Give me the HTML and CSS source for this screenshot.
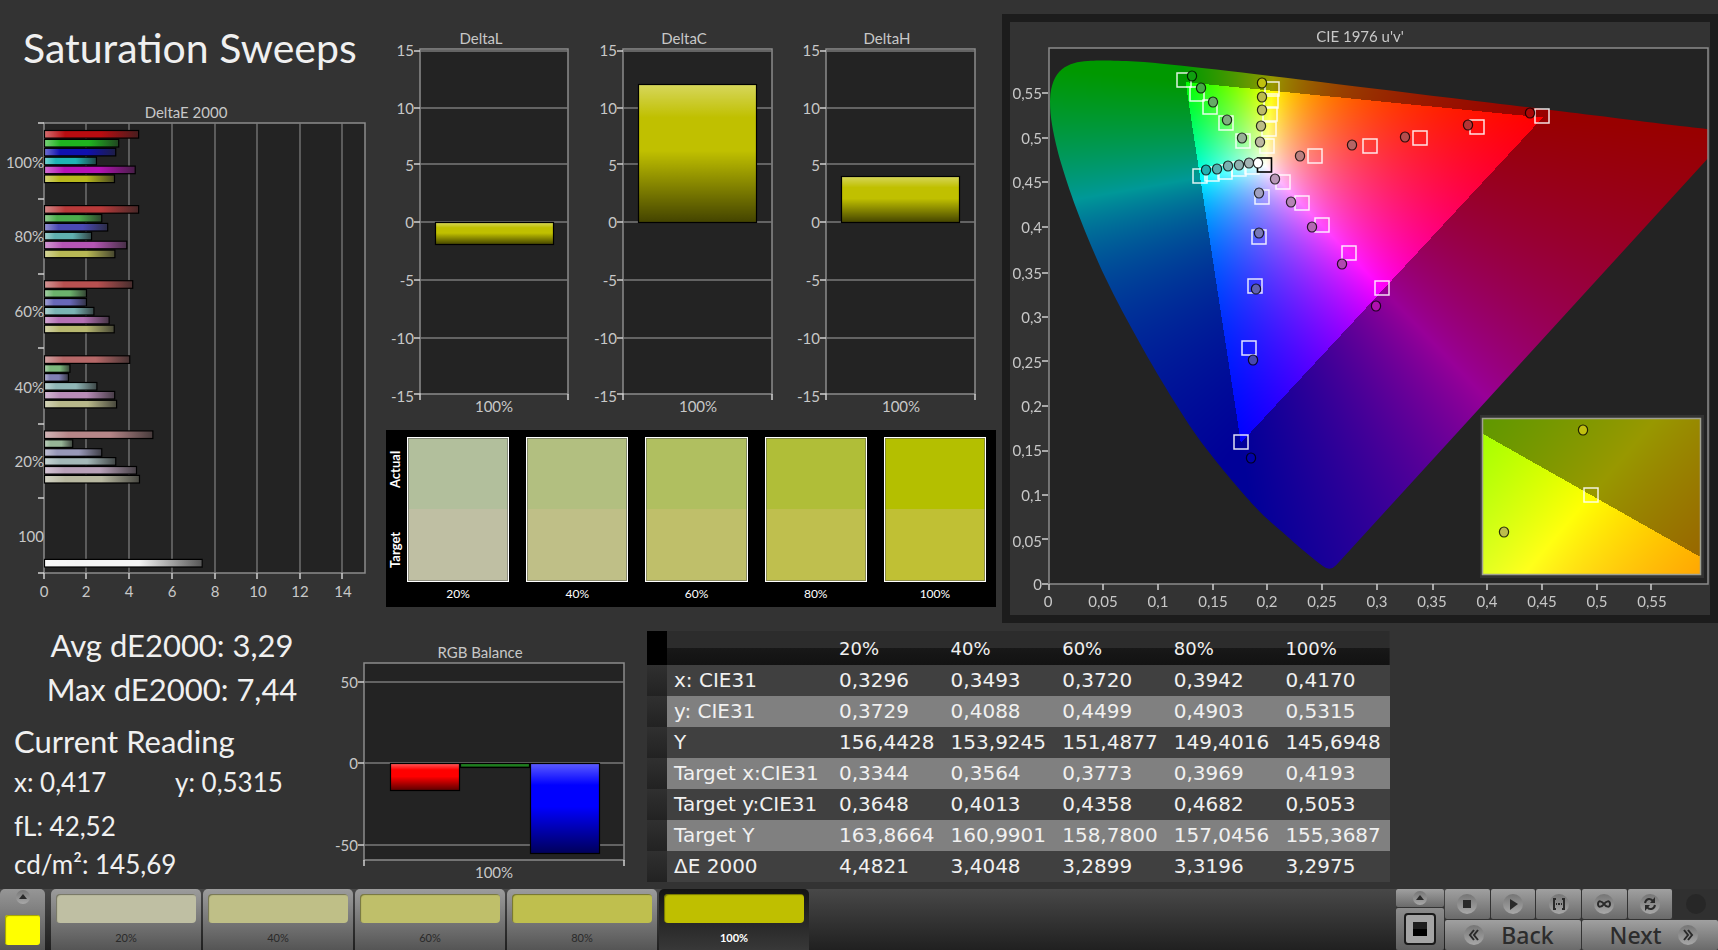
FILE: index.html
```
<!DOCTYPE html>
<html lang="en">
<head>
<meta charset="utf-8">
<title>Saturation Sweeps</title>
<link rel="stylesheet" href="styles.css">
</head>
<body>
<svg class="defs" width="0" height="0" aria-hidden="true">
  <defs>
    <linearGradient id="gloss-x" x1="0" x2="1" y1="0" y2="0">
      <stop offset="0" stop-color="#fff" stop-opacity=".4"/>
      <stop offset=".22" stop-color="#fff" stop-opacity="0"/>
      <stop offset=".6" stop-color="#222" stop-opacity="0"/>
      <stop offset="1" stop-color="#222" stop-opacity=".75"/>
    </linearGradient>
    <linearGradient id="gloss-y" x1="0" x2="0" y1="0" y2="1">
      <stop offset="0" stop-color="#fff" stop-opacity=".36"/>
      <stop offset=".24" stop-color="#fff" stop-opacity="0"/>
      <stop offset=".48" stop-color="#000" stop-opacity="0"/>
      <stop offset="1" stop-color="#000" stop-opacity=".65"/>
    </linearGradient>
  </defs>
</svg>

<main class="workspace">
  <div class="row-top">
    <section class="sweep">
      <h1 class="title">Saturation Sweeps</h1>
      <svg class="chart" viewBox="0 100 386 510" role="img" aria-label="DeltaE 2000 chart">
        <rect class="plot" x="44" y="123" width="321" height="450"/>
        <path class="grid" d="M86 123V573M129 123V573M172 123V573M215 123V573M257 123V573M300 123V573M342 123V573"/>
        <path class="tick" d="M38 123H44M38 199H44M38 274H44M38 348H44M38 424H44M38 498H44M38 573H44M44 573V579M86 573V579M129 573V579M172 573V579M215 573V579M257 573V579M300 573V579M342 573V579"/>
        <g id="delta-e-bars"></g>
        <g class="mid">
          <text x="186" y="118">DeltaE 2000</text>
          <text x="44" y="597">0</text><text x="86" y="597">2</text><text x="129" y="597">4</text><text x="172" y="597">6</text>
          <text x="215" y="597">8</text><text x="258" y="597">10</text><text x="300" y="597">12</text><text x="343" y="597">14</text>
        </g>
        <g class="end">
          <text x="44" y="168">100%</text><text x="44" y="242">80%</text><text x="44" y="317">60%</text>
          <text x="44" y="393">40%</text><text x="44" y="467">20%</text><text x="44" y="542">100</text>
        </g>
      </svg>
    </section>

    <section class="deltas">
      <svg class="chart" viewBox="386 0 616 420" role="img" aria-label="DeltaL, DeltaC and DeltaH charts">
        <g>
          <rect class="plot" x="420" y="49" width="148" height="345"/>
          <path class="grid" d="M420 51H568M420 108H568M420 164H568M420 222H568M420 280H568M420 338H568"/>
          <path class="tick" d="M414 51H420M414 108H420M414 164H420M414 222H420M414 280H420M414 338H420M414 394H420V400M568 394V400"/>
        </g>
        <g>
          <rect class="plot" x="623" y="49" width="149" height="345"/>
          <path class="grid" d="M623 51H772M623 108H772M623 164H772M623 222H772M623 280H772M623 338H772"/>
          <path class="tick" d="M617 51H623M617 108H623M617 164H623M617 222H623M617 280H623M617 338H623M617 394H623V400M772 394V400"/>
        </g>
        <g>
          <rect class="plot" x="826" y="49" width="149" height="345"/>
          <path class="grid" d="M826 51H975M826 108H975M826 164H975M826 222H975M826 280H975M826 338H975"/>
          <path class="tick" d="M820 51H826M820 108H826M820 164H826M820 222H826M820 280H826M820 338H826M820 394H826V400M975 394V400"/>
        </g>
        <g id="delta-bars"></g>
        <g class="mid">
          <text x="481" y="44">DeltaL</text><text x="684" y="44">DeltaC</text><text x="887" y="44">DeltaH</text>
          <text x="494" y="412">100%</text><text x="698" y="412">100%</text><text x="901" y="412">100%</text>
        </g>
        <g class="end">
          <text x="414" y="56">15</text><text x="414" y="114">10</text><text x="414" y="171">5</text><text x="414" y="228">0</text><text x="414" y="286">-5</text><text x="414" y="344">-10</text><text x="414" y="402">-15</text>
          <text x="617" y="56">15</text><text x="617" y="114">10</text><text x="617" y="171">5</text><text x="617" y="228">0</text><text x="617" y="286">-5</text><text x="617" y="344">-10</text><text x="617" y="402">-15</text>
          <text x="820" y="56">15</text><text x="820" y="114">10</text><text x="820" y="171">5</text><text x="820" y="228">0</text><text x="820" y="286">-5</text><text x="820" y="344">-10</text><text x="820" y="402">-15</text>
        </g>
      </svg>
      <div class="compare">
        <div class="compare-sides"><span>Actual</span><span>Target</span></div>
        <div class="pair"><div class="pair-box pair-20"></div><span>20%</span></div>
        <div class="pair"><div class="pair-box pair-40"></div><span>40%</span></div>
        <div class="pair"><div class="pair-box pair-60"></div><span>60%</span></div>
        <div class="pair"><div class="pair-box pair-80"></div><span>80%</span></div>
        <div class="pair"><div class="pair-box pair-100"></div><span>100%</span></div>
      </div>
    </section>

    <section class="cie">
      <canvas class="cie-layer" id="cie-canvas" width="700" height="593"></canvas>
      <svg class="cie-layer chart" viewBox="1010 22 700 593" role="img" aria-label="CIE 1976 chromaticity diagram">
        <rect class="frame" x="1049" y="48" width="659" height="536"/>
        <path class="tick" d="M1042 93H1048M1042 138H1048M1042 182H1048M1042 227H1048M1042 273H1048M1042 317H1048M1042 361H1048M1042 406H1048M1042 451H1048M1042 495H1048M1042 539H1048M1042 584H1048M1049 584V590M1103 584V590M1158 584V590M1213 584V590M1267 584V590M1322 584V590M1377 584V590M1433 584V590M1487 584V590M1542 584V590M1597 584V590M1651 584V590"/>
        <g id="cie-markers"></g>
        <g class="mid">
          <text x="1360" y="42">CIE 1976 u'v'</text>
          <text x="1048" y="607">0</text><text x="1103" y="607">0,05</text><text x="1158" y="607">0,1</text><text x="1213" y="607">0,15</text>
          <text x="1267" y="607">0,2</text><text x="1322" y="607">0,25</text><text x="1377" y="607">0,3</text><text x="1432" y="607">0,35</text>
          <text x="1487" y="607">0,4</text><text x="1542" y="607">0,45</text><text x="1597" y="607">0,5</text><text x="1652" y="607">0,55</text>
        </g>
        <g class="end">
          <text x="1042" y="99">0,55</text><text x="1042" y="144">0,5</text><text x="1042" y="188">0,45</text><text x="1042" y="233">0,4</text>
          <text x="1042" y="279">0,35</text><text x="1042" y="323">0,3</text><text x="1042" y="368">0,25</text><text x="1042" y="412">0,2</text>
          <text x="1042" y="456">0,15</text><text x="1042" y="501">0,1</text><text x="1042" y="547">0,05</text><text x="1042" y="590">0</text>
        </g>
      </svg>
    </section>
  </div>

  <div class="row-bottom">
    <section class="stats">
      <p class="stat-main">Avg dE2000: 3,29</p>
      <p class="stat-main">Max dE2000: 7,44</p>
      <h2 class="stat-head">Current Reading</h2>
      <div class="stat-xy"><span>x: 0,417</span><span>y: 0,5315</span></div>
      <p class="stat-line">fL: 42,52</p>
      <p class="stat-line stat-last">cd/m²: 145,69</p>
    </section>

    <section class="balance">
      <svg class="chart" viewBox="330 640 317 241" role="img" aria-label="RGB Balance chart">
        <rect class="plot" x="364" y="663" width="260" height="197"/>
        <path class="grid" d="M364 682H624M364 763H624M364 845H624"/>
        <path class="tick" d="M358 682H364M358 763H364M358 845H364M364 860V866M624 860V866"/>
        <g id="rgb-bars"></g>
        <g class="mid"><text x="480" y="658">RGB Balance</text><text x="494" y="878">100%</text></g>
        <g class="end"><text x="358" y="688">50</text><text x="358" y="769">0</text><text x="358" y="851">-50</text></g>
      </svg>
    </section>

    <section class="readings">
      <table class="grid-table">
        <colgroup><col class="col-handle"><col class="col-name"><col><col><col><col><col></colgroup>
        <thead>
          <tr><td class="handle"></td><th></th><th scope="col">20%</th><th scope="col">40%</th><th scope="col">60%</th><th scope="col">80%</th><th scope="col">100%</th></tr>
        </thead>
        <tbody>
          <tr><td class="handle"></td><th scope="row">x: CIE31</th><td>0,3296</td><td>0,3493</td><td>0,3720</td><td>0,3942</td><td>0,4170</td></tr>
          <tr><td class="handle"></td><th scope="row">y: CIE31</th><td>0,3729</td><td>0,4088</td><td>0,4499</td><td>0,4903</td><td>0,5315</td></tr>
          <tr><td class="handle"></td><th scope="row">Y</th><td>156,4428</td><td>153,9245</td><td>151,4877</td><td>149,4016</td><td>145,6948</td></tr>
          <tr><td class="handle"></td><th scope="row">Target x:CIE31</th><td>0,3344</td><td>0,3564</td><td>0,3773</td><td>0,3969</td><td>0,4193</td></tr>
          <tr><td class="handle"></td><th scope="row">Target y:CIE31</th><td>0,3648</td><td>0,4013</td><td>0,4358</td><td>0,4682</td><td>0,5053</td></tr>
          <tr><td class="handle"></td><th scope="row">Target Y</th><td>163,8664</td><td>160,9901</td><td>158,7800</td><td>157,0456</td><td>155,3687</td></tr>
          <tr><td class="handle"></td><th scope="row">ΔE 2000</th><td>4,4821</td><td>3,4048</td><td>3,2899</td><td>3,3196</td><td>3,2975</td></tr>
        </tbody>
      </table>
    </section>
  </div>
</main>

<footer class="dock">
  <button class="current" type="button" aria-label="Current colour">
    <span class="knob knob-small"><svg viewBox="0 0 14 14" width="14" height="14"><path d="M7 4L11 9H3Z"/></svg></span>
    <span class="current-color"></span>
  </button>
  <nav class="patches">
    <button class="patch" type="button"><span class="patch-color patch-20"></span>20%</button>
    <button class="patch" type="button"><span class="patch-color patch-40"></span>40%</button>
    <button class="patch" type="button"><span class="patch-color patch-60"></span>60%</button>
    <button class="patch" type="button"><span class="patch-color patch-80"></span>80%</button>
    <button class="patch patch-active" type="button"><span class="patch-color patch-100"></span>100%</button>
  </nav>
  <div class="pattern">
    <button class="key" type="button" aria-label="Expand"><span class="knob knob-small"><svg viewBox="0 0 14 14" width="14" height="14"><path d="M7 4L11 9H3Z"/></svg></span></button>
    <button class="key key-pattern" type="button" aria-label="Pattern">
      <svg viewBox="0 0 32 32" width="32" height="32"><rect x="1" y="1" width="30" height="30" rx="3" fill="#a4a4a4" stroke="#1a1a1a" stroke-width="2"/><rect x="9" y="9" width="14" height="14" fill="#000"/><rect x="9" y="9" width="14" height="7" fill="#1e1e1e"/></svg>
    </button>
  </div>
  <div class="transport">
    <div class="keys">
      <button class="key" type="button" aria-label="Stop"><span class="knob"><svg viewBox="0 0 20 20" width="20" height="20"><path d="M6 6H14V14H6Z"/></svg></span></button>
      <button class="key" type="button" aria-label="Play"><span class="knob"><svg viewBox="0 0 20 20" width="20" height="20"><path d="M7 5L15 10L7 16Z"/></svg></span></button>
      <button class="key" type="button" aria-label="Range"><span class="knob"><svg viewBox="0 0 20 20" width="20" height="20"><path class="line" d="M7 5H5V15H7M13 5H15V15H13"/><path d="M7 9H8V11H7ZM9 9H11V11H9ZM12 9H13V11H12Z"/></svg></span></button>
      <button class="key" type="button" aria-label="Loop"><span class="knob"><svg viewBox="0 0 20 20" width="20" height="20"><path class="line" d="M10 10C8 7 4 6 4 10S8 13 10 10S16 6 16 10S12 13 10 10Z"/></svg></span></button>
      <button class="key" type="button" aria-label="Refresh"><span class="knob"><svg viewBox="0 0 20 20" width="20" height="20"><path class="line" d="M5 9C6 4 11 4 13 7M15 11C14 16 9 16 7 13"/><path d="M15 3V9H10ZM5 17V11H10Z"/></svg></span></button>
      <button class="key key-off" type="button" aria-label="Record"><span class="knob"></span></button>
    </div>
    <div class="steps">
      <button class="key step step-back" type="button"><span class="knob"><svg viewBox="0 0 20 20" width="20" height="20"><path class="line" d="M10 5L6 10L10 15M14 5L10 10L14 15"/></svg></span>Back</button>
      <button class="key step step-next" type="button">Next<span class="knob"><svg viewBox="0 0 20 20" width="20" height="20"><path class="line" d="M6 5L10 10L6 15M10 5L14 10L10 15"/></svg></span></button>
    </div>
  </div>
</footer>
<script src="charts.js"></script>
</body>
</html>
```
FILE: styles.css
```
* { box-sizing: border-box; }
body {
  margin: 0;
  min-height: 100vh;
  display: flex;
  flex-direction: column;
  background: #333;
  color: #f0f0f0;
  font-family: Lato, "Open Sans", sans-serif;
}
h1, h2, p { margin: 0; font-weight: 400; }
button { font: inherit; border: 0; padding: 0; cursor: pointer; }
.defs { position: absolute; }

.workspace { flex: 1; }
.row-top {
  display: grid;
  grid-template-columns: 386fr 616fr 716fr;
  align-items: start;
}
.row-bottom {
  display: grid;
  grid-template-columns: 330fr 317fr 743fr 328fr;
  align-items: start;
}

.title {
  font-size: 41px;
  line-height: 48px;
  padding: 24px 0 28px 23px;
  white-space: nowrap;
}

/* charts */
.chart { display: block; width: 100%; height: auto; }
.chart text { font-size: 15px; fill: #c8c8c8; }
.mid { text-anchor: middle; }
.end { text-anchor: end; }
.plot { fill: #232323; stroke: #8c8c8c; stroke-width: 1.5; }
.frame { fill: none; stroke: #8c8c8c; stroke-width: 1.5; }
.grid { fill: none; stroke: #7a7a7a; stroke-width: 1.3; }
.tick { fill: none; stroke: #d0d0d0; stroke-width: 1.5; }
.bar-edge { fill: none; stroke: #000; stroke-width: 1.2; }
.target { fill: none; stroke: #fff; stroke-opacity: .88; stroke-width: 1.5; }
.target-white { fill: none; stroke: #000; stroke-width: 1.6; }
.reading { stroke: #000; stroke-opacity: .8; stroke-width: 1.2; }

/* actual / target comparison */
.compare {
  display: grid;
  grid-template-columns: minmax(0, 4fr) repeat(5, minmax(0, 102fr));
  column-gap: 17px;
  margin: 10px 6px 0 0;
  padding: 7px 10px 0 0;
  height: 177px;
  background: #000;
  color: #fff;
  font-size: 12px;
}
.compare-sides {
  display: flex;
  flex-direction: column;
  gap: 15px;
  height: 145px;
  width: 18px;
}
.compare-sides span {
  flex: 1;
  writing-mode: vertical-rl;
  transform: rotate(180deg);
  text-align: center;
  font-size: 13px;
  font-weight: 700;
  line-height: 18px;
}
.pair { text-align: center; line-height: 24px; }
.pair-box { height: 145px; border: 1px solid #fff; box-shadow: inset 0 0 0 1px rgba(90, 90, 90, .5); }
.pair-20 { background: linear-gradient(#b2bf9c 50%, #bfbfa3 50%); }
.pair-40 { background: linear-gradient(#b2bf80 50%, #bfbf87 50%); }
.pair-60 { background: linear-gradient(#b0bf60 50%, #bfbf6a 50%); }
.pair-80 { background: linear-gradient(#b0be38 50%, #bfbf4e 50%); }
.pair-100 { background: linear-gradient(#b4bf00 50%, #c0c034 50%); }

/* chromaticity panel */
.cie {
  display: grid;
  margin-top: 14px;
  border: 8px solid #1c1c1c;
}
.cie-layer { grid-area: 1 / 1; display: block; width: 100%; }

/* readings */
.stats { padding-left: 14px; white-space: nowrap; }
.stat-main { font-size: 31px; line-height: 44px; text-align: center; }
.stat-head { font-size: 31px; line-height: 44px; margin-top: 8px; }
.stat-xy { display: grid; grid-template-columns: 161fr 155fr; font-size: 26px; line-height: 38px; }
.stat-line { font-size: 26px; line-height: 38px; margin-top: 6px; }
.stat-last { margin-top: 0; }
.balance { padding-top: 17px; }

.readings { padding-top: 8px; }
.grid-table {
  width: 100%;
  table-layout: fixed;
  border-collapse: collapse;
  font-family: "DejaVu Sans", sans-serif;
  font-size: 20px;
  line-height: 31px;
  white-space: nowrap;
}
.col-handle { width: 20px; }
.col-name { width: 165px; }
.grid-table th, .grid-table td { padding: 0 0 0 7px; text-align: left; font-weight: 400; }
.grid-table thead { font-size: 18px; line-height: 32px; background: linear-gradient(#2c2c2c 50%, #181818 50%, #121212); }
.grid-table thead th { padding-top: 2px; }
.grid-table tbody tr { background: #404040; }
.grid-table tbody tr:nth-child(even) { background: #808080; }
.grid-table .handle { padding: 0; background: linear-gradient(#303030, #222); }
.grid-table thead .handle { background: #000; }

/* bottom dock */
.dock {
  display: flex;
  height: 61px;
  background: linear-gradient(#484848, #202020);
}
.current {
  display: flex;
  flex-direction: column;
  align-items: center;
  width: 45px;
  padding-top: 1px;
  gap: 11px;
  margin-right: 6px;
  background: linear-gradient(#969696, #555);
  border-radius: 5px 5px 0 0;
}
.current-color { width: 35px; height: 30px; border-radius: 3px; background: #ff0; box-shadow: inset 1px 1px 1px #a0a000; }
.patches { display: flex; gap: 2px; flex: 1; }
.patch {
  width: 150px;
  padding: 5px;
  display: flex;
  flex-direction: column;
  gap: 8px;
  text-align: center;
  font-size: 11px;
  line-height: 14px;
  color: #2a2a2a;
  background: linear-gradient(#9c9c9c, #555);
  border-radius: 5px 5px 0 0;
}
.patch-active { background: linear-gradient(#141414, #383838); color: #fff; font-weight: 700; }
.patch-color { height: 36px; border-radius: 4px; align-self: stretch; box-shadow: inset 1px 1px 1px rgba(0, 0, 0, .4); }
.patch-20 { background: #bfbfa3; }
.patch-40 { background: #bfbf87; }
.patch-60 { background: #bfbf6a; }
.patch-80 { background: #bfbf4e; }
.patch-100 { background: #bfbf00; }

.pattern { display: grid; grid-template-rows: 18px 42px; gap: 1px; width: 48px; margin-right: 1px; background: #333; }
.transport { display: grid; grid-template-rows: 30px 30px; gap: 1px; width: 273px; background: #333; }
.keys { display: grid; grid-template-columns: repeat(6, 1fr); gap: 1px; }
.steps { display: grid; grid-template-columns: 1fr 1fr; gap: 1px; }
.key {
  display: flex;
  align-items: center;
  justify-content: center;
  background: linear-gradient(#a0a0a0, #6a6a6a);
  border-radius: 2px;
}
.key-pattern { background: linear-gradient(#8c8c8c, #606060); }
.key-off { background: #303030; }
.step {
  gap: 17px;
  font-family: "Noto Sans", sans-serif;
  font-weight: 500;
  font-size: 23px;
  line-height: 30px;
  color: #2c2c2c;
}
.step-back { padding-right: 8px; }
.step-next { padding-left: 8px; }
.knob {
  display: block;
  width: 20px;
  height: 20px;
  border-radius: 50%;
  background: linear-gradient(#757575, #a8a8a8);
}
.knob-small { width: 14px; height: 14px; }
.key-off .knob { background: #272727; }
.knob svg { display: block; fill: #2a2a2a; }
.knob .line { fill: none; stroke: #2a2a2a; stroke-width: 2; }
```
FILE: charts.js
```
const SVG = 'http://www.w3.org/2000/svg';

function add(parent, name, attrs) {
  const el = document.createElementNS(SVG, name);
  for (const key in attrs) el.setAttribute(key, attrs[key]);
  parent.appendChild(el);
}

function bar(parent, x, y, width, height, color, gloss) {
  add(parent, 'rect', { x, y, width, height, fill: color });
  add(parent, 'rect', { x, y, width, height, fill: `url(#${gloss})` });
  add(parent, 'rect', { x, y, width, height, class: 'bar-edge' });
}

/* DeltaE 2000: red, green, blue, cyan, magenta, yellow, white per saturation level */
const PER_UNIT = 21.2;
const levels = [
  [[4.44, '#b90c10'], [3.5, '#1fb31f'], [3.36, '#1010b0'], [2.45, '#1fb4b4'], [4.28, '#b512b5'], [3.3, '#b8b81c']],
  [[4.44, '#b83a3a'], [2.7, '#4cae4c'], [2.98, '#4a4ab4'], [2.22, '#60b0b0'], [3.88, '#b455b4'], [3.32, '#b8b855']],
  [[4.16, '#b85050'], [1.98, '#6cb26c'], [1.98, '#6868b8'], [2.33, '#7ab4b4'], [3.05, '#b470b4'], [3.29, '#b8b870']],
  [[4.02, '#b66868'], [1.2, '#7cb87c'], [1.13, '#8080b4'], [2.47, '#90b6b6'], [3.31, '#b88cb8'], [3.4, '#b8b88a']],
  [[5.11, '#b68688'], [1.33, '#96b496'], [2.7, '#9898b8'], [3.36, '#a4b8b8'], [4.34, '#b8a0b8'], [4.48, '#b8b8a0']],
  [null, null, null, null, null, null, [7.44, '#f4f4f4']]
];
const deltaE = document.getElementById('delta-e-bars');
levels.forEach((level, i) => level.forEach((item, j) => {
  if (item) bar(deltaE, 44.5, 130.5 + i * 75.1 + j * 8.9, item[0] * PER_UNIT, 7.6, item[1], 'gloss-x');
}));

const deltas = document.getElementById('delta-bars');
bar(deltas, 435.5, 222.5, 118, 22, '#c0c000', 'gloss-y');
bar(deltas, 638.5, 84.5, 118, 138, '#c0c000', 'gloss-y');
bar(deltas, 841.5, 176.5, 118, 46, '#c0c000', 'gloss-y');

const balance = document.getElementById('rgb-bars');
bar(balance, 390.5, 763.5, 69, 27, '#ff0000', 'gloss-y');
bar(balance, 460.5, 763.5, 69, 4, '#208020', 'gloss-y');
bar(balance, 530.5, 763.5, 69, 90, '#0000ff', 'gloss-y');

/* CIE 1976 markers */
const markers = document.getElementById('cie-markers');
const targets = [
  [1184, 80], [1197, 94], [1210, 107], [1226, 123], [1243, 141],
  [1272, 89], [1271, 101], [1270, 114], [1269, 129], [1267, 146],
  [1200, 176], [1212, 174], [1225, 172], [1239, 169], [1252, 167],
  [1262, 197], [1259, 237], [1255, 286], [1249, 348], [1241, 442],
  [1283, 182], [1302, 203], [1322, 225], [1349, 253], [1382, 288],
  [1315, 156], [1370, 146], [1420, 138], [1477, 127], [1542, 116]
];
const readings = [
  [1192, 76, '#0f9f0f'], [1201, 88, '#46aa46'], [1213, 102, '#66aa66'], [1227, 120, '#80ae80'], [1242, 138, '#98b098'],
  [1262, 83, '#c0c010'], [1262, 97, '#bcbc4c'], [1262, 110, '#bcbc6a'], [1261, 126, '#bcbc86'], [1260, 142, '#bcb8a0'],
  [1206, 170, '#20b0b0'], [1217, 169, '#55b0b0'], [1228, 166, '#78b0b0'], [1239, 165, '#90b0b0'], [1249, 163, '#a4b4b4'], [1258, 163, '#ffffff'],
  [1259, 193, '#a0a0c0'], [1259, 233, '#7878b8'], [1256, 289, '#6060b0'], [1253, 360, '#4848b0'], [1251, 458, '#0000a8'],
  [1275, 179, '#b898b8'], [1291, 202, '#b484b4'], [1312, 227, '#b468b4'], [1342, 264, '#b048b0'], [1376, 306, '#b010b0'],
  [1300, 156, '#b88080'], [1352, 145, '#b46464'], [1405, 137, '#b44c4c'], [1468, 125, '#b43434'], [1530, 113, '#a80808']
];
function square(x, y, name) {
  add(markers, 'rect', { x: x - 7, y: y - 7, width: 14, height: 14, class: name });
}
function dot(x, y, fill) {
  add(markers, 'ellipse', { cx: x, cy: y, rx: 4.6, ry: 5, fill, class: 'reading' });
}
targets.forEach(p => square(p[0], p[1], 'target'));
square(1264.5, 165, 'target-white');
readings.forEach(p => dot(p[0], p[1], p[2]));
square(1591, 495, 'target');
dot(1583, 430, '#c0c010');
dot(1504, 532, '#bcbc4c');

/* Chromaticity fill */
const OX = 1010, OY = 22;
const canvas = document.getElementById('cie-canvas');
const ctx = canvas.getContext('2d');

const toX = u => 1048.5 + u * 1096.4 - OX;
const toY = v => 583.7 - v * 891.6 - OY;

function color(x, y) {
  const z = 1 - x - y;
  const lin = [
    3.2406 * x - 1.5372 * y - 0.4986 * z,
    -0.9689 * x + 1.8758 * y + 0.0415 * z,
    0.0557 * x - 0.204 * y + 1.057 * z
  ];
  const inside = Math.min(...lin) >= 0;
  const peak = Math.max(...lin);
  const level = inside ? 255 : 152;
  return lin.map(c => level * Math.max(c, 0) / peak);
}

function fillArea(left, top, width, height, mapping) {
  const layer = document.createElement('canvas');
  layer.width = width;
  layer.height = height;
  const lc = layer.getContext('2d');
  const image = lc.createImageData(width, height);
  for (let j = 0; j < height; j++) {
    for (let i = 0; i < width; i++) {
      const [x, y] = mapping(left + i + 0.5, top + j + 0.5);
      const rgb = color(x, y);
      const k = (j * width + i) * 4;
      image.data[k] = rgb[0];
      image.data[k + 1] = rgb[1];
      image.data[k + 2] = rgb[2];
      image.data[k + 3] = 255;
    }
  }
  lc.putImageData(image, 0, 0);
  ctx.drawImage(layer, left, top);
}

const locus = [
  [.1741, .005], [.1644, .0109], [.1566, .0177], [.144, .0297], [.1241, .0578], [.1096, .0868],
  [.0913, .1327], [.0687, .2007], [.0454, .295], [.0235, .4127], [.0082, .5384], [.0039, .6548], [.0139, .7502],
  [.0389, .812], [.0743, .8338], [.1142, .8262], [.1547, .8059], [.2296, .7543], [.3016, .6923], [.3731, .6245],
  [.4441, .5547], [.5125, .4866], [.5752, .4242], [.627, .3725], [.6658, .334], [.6915, .3083], [.719, .2809], [.7347, .2653]
].map(([x, y]) => {
  const d = -2 * x + 12 * y + 3;
  return [toX(4 * x / d), toY(9 * y / d)];
});

const between = (a, b, t) => [a[0] + (b[0] - a[0]) * t, a[1] + (b[1] - a[1]) * t];

function traceLocus(points) {
  const corner = [points[0][0], points[0][1] + 3];
  const last = points[points.length - 1];
  const start = between(corner, points[1], .3);
  const pts = [start, ...points.slice(1)];
  ctx.moveTo(...start);
  for (let i = 0; i < pts.length - 1; i++) {
    const p0 = pts[Math.max(i - 1, 0)];
    const p1 = pts[i];
    const p2 = pts[i + 1];
    const p3 = pts[Math.min(i + 2, pts.length - 1)];
    ctx.bezierCurveTo(
      p1[0] + (p2[0] - p0[0]) / 6, p1[1] + (p2[1] - p0[1]) / 6,
      p2[0] - (p3[0] - p1[0]) / 6, p2[1] - (p3[1] - p1[1]) / 6,
      p2[0], p2[1]
    );
  }
  ctx.lineTo(...between(corner, last, .015));
  ctx.quadraticCurveTo(corner[0], corner[1], start[0], start[1]);
}

ctx.fillStyle = '#232323';
ctx.fillRect(39, 26, 659, 536);

ctx.save();
ctx.beginPath();
ctx.rect(39, 26, 659, 536);
ctx.clip();
ctx.beginPath();
traceLocus(locus);
ctx.clip();
fillArea(39, 26, 659, 536, (px, py) => {
  const u = (px + OX - 1048.5) / 1096.4;
  const v = (583.7 - py - OY) / 891.6;
  const d = 6 * u - 16 * v + 12;
  return [9 * u / d, 4 * v / d];
});
ctx.restore();

/* Magnified view around the selected target, in xy */
ctx.fillStyle = '#333';
ctx.fillRect(1480 - OX, 415 - OY, 224, 163);
fillArea(1483 - OX, 419 - OY, 217, 155, (px, py) => [
  0.4193 + (px + OX - 1591) / 3472,
  0.5053 - (py + OY - 495) / 2475
]);
ctx.strokeStyle = '#a0a090';
ctx.lineWidth = 1.5;
ctx.strokeRect(1482.5 - OX, 418.5 - OY, 218, 156);
```
